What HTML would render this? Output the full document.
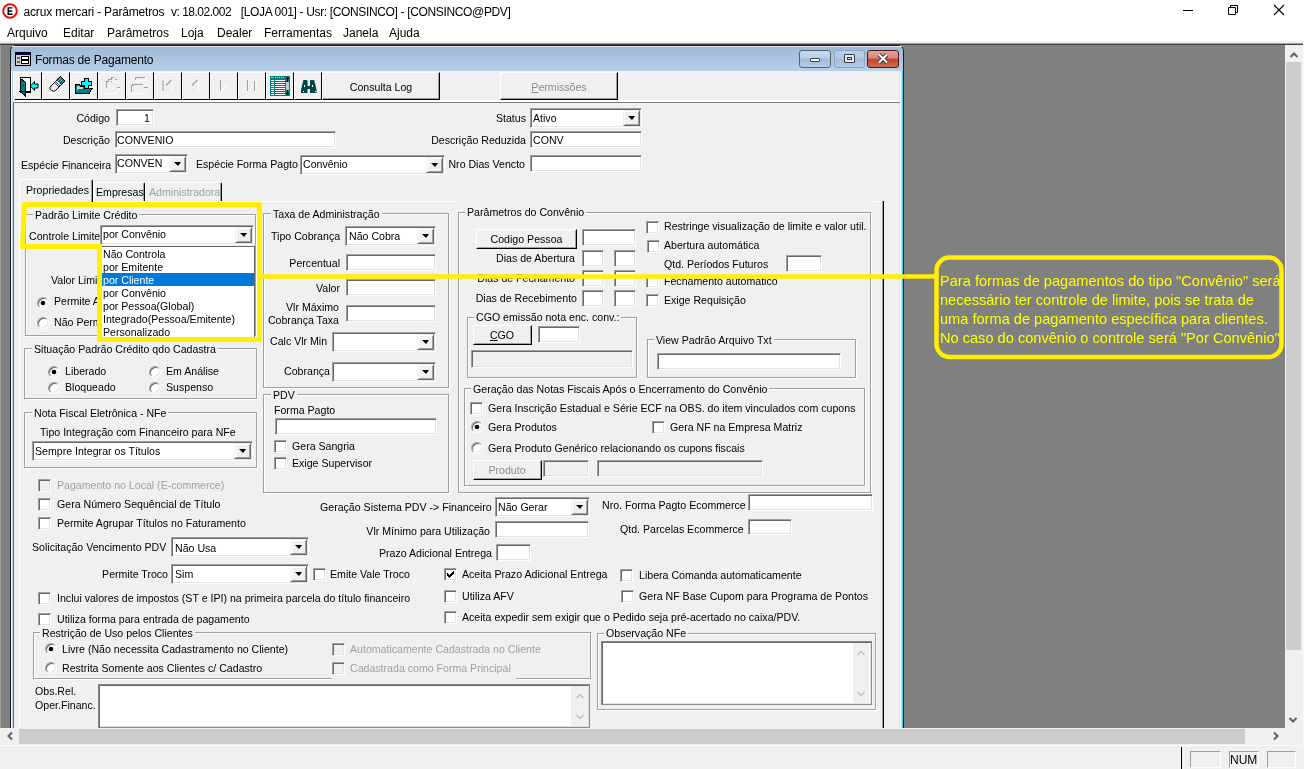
<!DOCTYPE html><html><head><meta charset="utf-8"><style>
*{box-sizing:border-box}
body{margin:0;width:1304px;height:769px;overflow:hidden;position:relative;background:#fff;font-family:"Liberation Sans",sans-serif}
.a{position:absolute}
.t{position:absolute;font-size:10.6px;line-height:13px;white-space:pre;color:#000}
.ed{position:absolute;border-top:1px solid #a0a0a0;border-left:1px solid #a0a0a0;border-right:1px solid #fff;border-bottom:1px solid #fff;box-shadow:inset 1px 1px 0 #696969,inset -1px -1px 0 #e3e3e3}
.cbtn{position:absolute;background:#f0f0f0;border-top:1px solid #f0f0f0;border-left:1px solid #f0f0f0;border-right:1px solid #696969;border-bottom:1px solid #696969;box-shadow:inset 1px 1px 0 #fff,inset -1px -1px 0 #a0a0a0}
.arr{position:absolute;left:50%;top:50%;margin-left:-4px;margin-top:-2px;width:0;height:0;border-left:4px solid transparent;border-right:3px solid transparent;border-top:4px solid #000}
.ck{position:absolute;width:13px;height:13px;border-top:1px solid #a0a0a0;border-left:1px solid #a0a0a0;border-right:1px solid #fff;border-bottom:1px solid #fff;box-shadow:inset 1px 1px 0 #696969,inset -1px -1px 0 #e3e3e3}
.rd{position:absolute;width:12px;height:12px;border-radius:50%;background:#fff;border:1px solid;border-color:#a0a0a0 #fff #fff #a0a0a0;box-shadow:inset 1px 1px 0 #696969,inset -1px -1px 0 #e3e3e3}
.dot{position:absolute;left:3px;top:3px;width:4px;height:4px;border-radius:50%;background:#000;box-shadow:0 0 0 0.4px #000}
.gb{position:absolute;border:1px solid #a0a0a0;box-shadow:inset 1px 1px 0 #fff,1px 1px 0 #fff}
.bt{position:absolute;background:#f0f0f0;border-top:1px solid #fff;border-left:1px solid #fff;border-right:1px solid #000;border-bottom:1px solid #000;box-shadow:inset -1px -1px 0 #a0a0a0}
</style></head><body><div style="position:absolute;left:0;top:0;width:1304px;height:769px;overflow:hidden;will-change:transform"><svg class="a" style="left:2px;top:3px" width="16" height="16"><circle cx="8" cy="8" r="6.8" fill="#fff" stroke="#e81010" stroke-width="2"/><path d="M5.5 4.2h5v1.4h-3.4v1.7h3.1v1.4h-3.1v1.8h3.5v1.4h-5.1z" fill="#000"/></svg>
<div class="a" style="left:23.5px;top:4px;font-size:12px;line-height:16px;white-space:pre;letter-spacing:-0.17px;color:#000">acrux mercari - Parâmetros</div>
<div class="a" style="left:171px;top:4px;font-size:12px;line-height:16px;white-space:pre;letter-spacing:-0.5px;color:#000">v: 18.02.002</div>
<div class="a" style="left:240.7px;top:4px;font-size:12px;line-height:16px;white-space:pre;letter-spacing:-0.35px;color:#000">[LOJA 001] - Usr: [CONSINCO] - [CONSINCO@PDV]</div>
<div class="a" style="left:1183px;top:10px;width:10px;height:1px;background:#000"></div>
<svg class="a" style="left:1227px;top:4px" width="12" height="12"><path d="M1.5 3.5h7v7h-7z M3.5 3.5v-2h7v7h-2" fill="none" stroke="#000" stroke-width="1"/></svg>
<svg class="a" style="left:1273px;top:4px" width="12" height="12"><path d="M1 1L11 11M11 1L1 11" stroke="#000" stroke-width="1.1"/></svg>
<div class="a" style="left:7px;top:25px;font-size:12px;line-height:16px;white-space:pre;color:#000">Arquivo</div>
<div class="a" style="left:63px;top:25px;font-size:12px;line-height:16px;white-space:pre;color:#000">Editar</div>
<div class="a" style="left:107px;top:25px;font-size:12px;line-height:16px;white-space:pre;color:#000">Parâmetros</div>
<div class="a" style="left:181px;top:25px;font-size:12px;line-height:16px;white-space:pre;color:#000">Loja</div>
<div class="a" style="left:217px;top:25px;font-size:12px;line-height:16px;white-space:pre;color:#000">Dealer</div>
<div class="a" style="left:264px;top:25px;font-size:12px;line-height:16px;white-space:pre;color:#000">Ferramentas</div>
<div class="a" style="left:343px;top:25px;font-size:12px;line-height:16px;white-space:pre;color:#000">Janela</div>
<div class="a" style="left:389px;top:25px;font-size:12px;line-height:16px;white-space:pre;color:#000">Ajuda</div>
<div class="a" style="left:0px;top:41px;width:1304px;height:2px;background:#f0f0f0;"></div>
<div class="a" style="left:0px;top:43px;width:1303px;height:1px;background:#a0a0a0;"></div>
<div class="a" style="left:0px;top:44px;width:1303px;height:1px;background:#404040;"></div>
<div class="a" style="left:0px;top:45px;width:1px;height:683px;background:#a0a0a0;"></div>
<div class="a" style="left:1px;top:45px;width:1284px;height:683px;background:#808080;"></div>
<div class="a" style="left:1285px;top:45px;width:18px;height:701px;background:#f0f0f0;"></div>
<div class="a" style="left:1303px;top:45px;width:1px;height:701px;background:#fafafa;"></div>
<div class="a" style="left:1286px;top:62px;width:15px;height:588px;background:#cdcdcd;"></div>
<svg class="a" style="left:1289px;top:50px" width="10" height="10"><path d="M1.5 7L5 3.5L8.5 7" stroke="#606060" stroke-width="2" fill="none"/></svg>
<svg class="a" style="left:1288px;top:715px" width="10" height="10"><path d="M1.5 3L5 6.5L8.5 3" stroke="#606060" stroke-width="2" fill="none"/></svg>
<div class="a" style="left:0px;top:728px;width:1285px;height:18px;background:#f0f0f0;"></div>
<div class="a" style="left:19px;top:729px;width:1226px;height:15px;background:#cdcdcd;"></div>
<svg class="a" style="left:5px;top:731px" width="10" height="10"><path d="M7 1.5L3.5 5L7 8.5" stroke="#606060" stroke-width="2" fill="none"/></svg>
<svg class="a" style="left:1271px;top:731px" width="10" height="10"><path d="M3 1.5L6.5 5L3 8.5" stroke="#606060" stroke-width="2" fill="none"/></svg>
<div class="a" style="left:0px;top:746px;width:1304px;height:23px;background:#f0f0f0;"></div>
<div class="a" style="left:0px;top:745px;width:1303px;height:1px;background:#fafafa;"></div>
<div class="a" style="left:1181px;top:747px;width:1px;height:22px;background:#000;"></div>
<div class="a" style="left:1190px;top:751px;width:31px;height:17px;border-top:1px solid #a0a0a0;border-left:1px solid #a0a0a0;border-right:1px solid #fff;border-bottom:1px solid #fff"></div>
<div class="a" style="left:1229px;top:751px;width:30px;height:17px;border-top:1px solid #a0a0a0;border-left:1px solid #a0a0a0;border-right:1px solid #fff;border-bottom:1px solid #fff"></div>
<div class="a" style="left:1267px;top:751px;width:29px;height:17px;border-top:1px solid #a0a0a0;border-left:1px solid #a0a0a0;border-right:1px solid #fff;border-bottom:1px solid #fff"></div>
<div class="a" style="left:1230px;top:752px;font-size:12px;line-height:16px;white-space:pre;color:#000">NUM</div>
<div class="a" style="left:10px;top:45px;width:894px;height:683px;background:#bcd3ea;border:1px solid #1b1b1b;border-bottom:none;border-radius:6px 6px 0 0"></div>
<div class="a" style="left:11px;top:46px;width:892px;height:26px;border-radius:5px 5px 0 0;background:linear-gradient(#9db8d6,#b9d1ea)"></div>
<div class="a" style="left:12px;top:46px;width:890px;height:1px;background:#dfe9f5;"></div>
<svg class="a" style="left:15px;top:52px" width="16" height="14"><rect x="0.5" y="0.5" width="15" height="13" fill="#d4d0c8" stroke="#000"/><rect x="1" y="1" width="14" height="2" fill="#00007a"/><path d="M2 6h3M2 10h3" stroke="#000"/><rect x="6.5" y="4.5" width="7" height="3" fill="#fff" stroke="#000"/><rect x="6.5" y="8.5" width="7" height="3" fill="#fff" stroke="#000"/></svg>
<div class="a" style="left:35px;top:52px;font-size:12px;line-height:16px;white-space:pre;letter-spacing:-0.2px;color:#000">Formas de Pagamento</div>
<div class="a" style="left:799px;top:50px;width:32px;height:18px;border:1px solid #59606b;border-radius:3px;background:linear-gradient(#c9daee 0%,#b8cde6 45%,#9fb9d8 50%,#b5cde9 100%)"></div>
<div class="a" style="left:810px;top:58px;width:10px;height:4px;background:#fff;border:1px solid #3b4048;border-radius:1px"></div>
<div class="a" style="left:834px;top:50px;width:31px;height:18px;border:1px solid #8ea6c3;border-radius:3px;background:linear-gradient(#bcd0e8 0%,#b3c9e3 45%,#a3bcda 50%,#b3cbe6 100%)"></div>
<div class="a" style="left:844px;top:54px;width:11px;height:9px;background:#e8e8e8;border:1px solid #3b4048;border-radius:1px"><div style="position:absolute;left:2px;top:2px;width:5px;height:3px;border:1px solid #3b4048;background:#b8cbe4"></div></div>
<div class="a" style="left:867px;top:50px;width:32px;height:18px;border:1px solid #4a1a1a;border-radius:3px;background:linear-gradient(#e8a294 0%,#d98374 45%,#c0442c 50%,#d26b4f 100%)"></div>
<svg class="a" style="left:876px;top:52px" width="14" height="13"><path d="M3 2.5L11 10.5M11 2.5L3 10.5" stroke="#3b3030" stroke-width="4"/><path d="M3 2.5L11 10.5M11 2.5L3 10.5" stroke="#fff" stroke-width="2.2"/></svg>
<div class="a" style="left:13px;top:71px;width:888px;height:657px;background:#f0f0f0;"></div>
<div class="a" style="left:899px;top:71px;width:1px;height:657px;background:#e3e3e3;"></div>
<div class="a" style="left:900px;top:71px;width:1px;height:657px;background:#fff;"></div>
<div class="a" style="left:901px;top:71px;width:1px;height:657px;background:#c8dcf4;"></div>
<div class="a" style="left:902px;top:71px;width:1px;height:657px;background:#3cc8f4;"></div>
<div class="a" style="left:11px;top:71px;width:1px;height:657px;background:#fff;"></div>
<div class="a" style="left:12px;top:71px;width:1px;height:657px;background:#b8d0ec;"></div>
<div class="a" style="left:14px;top:72px;width:28px;height:28px;border-top:1px solid #fff;border-left:1px solid #fff;border-right:1px solid #000;border-bottom:1px solid #000;background:#f0f0f0"></div>
<div class="a" style="left:42px;top:72px;width:28px;height:28px;border-top:1px solid #fff;border-left:1px solid #fff;border-right:1px solid #000;border-bottom:1px solid #000;background:#f0f0f0"></div>
<div class="a" style="left:70px;top:72px;width:28px;height:28px;border-top:1px solid #fff;border-left:1px solid #fff;border-right:1px solid #000;border-bottom:1px solid #000;background:#f0f0f0"></div>
<div class="a" style="left:98px;top:72px;width:28px;height:28px;border-top:1px solid #fff;border-left:1px solid #fff;border-right:1px solid #000;border-bottom:1px solid #000;background:#f0f0f0"></div>
<div class="a" style="left:126px;top:72px;width:28px;height:28px;border-top:1px solid #fff;border-left:1px solid #fff;border-right:1px solid #000;border-bottom:1px solid #000;background:#f0f0f0"></div>
<div class="a" style="left:154px;top:72px;width:28px;height:28px;border-top:1px solid #fff;border-left:1px solid #fff;border-right:1px solid #000;border-bottom:1px solid #000;background:#f0f0f0"></div>
<div class="a" style="left:182px;top:72px;width:28px;height:28px;border-top:1px solid #fff;border-left:1px solid #fff;border-right:1px solid #000;border-bottom:1px solid #000;background:#f0f0f0"></div>
<div class="a" style="left:210px;top:72px;width:28px;height:28px;border-top:1px solid #fff;border-left:1px solid #fff;border-right:1px solid #000;border-bottom:1px solid #000;background:#f0f0f0"></div>
<div class="a" style="left:238px;top:72px;width:28px;height:28px;border-top:1px solid #fff;border-left:1px solid #fff;border-right:1px solid #000;border-bottom:1px solid #000;background:#f0f0f0"></div>
<div class="a" style="left:266px;top:72px;width:28px;height:28px;border-top:1px solid #fff;border-left:1px solid #fff;border-right:1px solid #000;border-bottom:1px solid #000;background:#f0f0f0"></div>
<div class="a" style="left:294px;top:72px;width:28px;height:28px;border-top:1px solid #fff;border-left:1px solid #fff;border-right:1px solid #000;border-bottom:1px solid #000;background:#f0f0f0"></div>
<svg class="a" style="left:0;top:0" width="340" height="100" shape-rendering="crispEdges">
<!-- door exit -->
<rect x="20" y="77" width="10" height="15" fill="#fff"/>
<path d="M20 77h10v15h-10z" fill="none" stroke="#000" stroke-width="1" transform="translate(0.5,0.5)" />
<path d="M20 78 L25.5 82.5 V96 L20 91 Z" fill="#008080" stroke="#000" stroke-width="1"/>
<rect x="19" y="91" width="11" height="1" fill="#000"/>
<rect x="23" y="85" width="1" height="1" fill="#000"/>
<path d="M30.5 86 L34.5 81.5 V84 H38 V88 H34.5 V90.5 Z" fill="#00ffff" stroke="#000" stroke-width="1" shape-rendering="auto"/>
<!-- eraser -->
<g shape-rendering="auto">
<path d="M51 86 L60.5 76.5 L65 81 L55.5 90.5 Q53.5 92 51.5 90.5 L50.5 89.5 Q49 88 51 86Z" fill="#e8e8e8" stroke="#000" stroke-width="1"/>
<path d="M57 79.5 L60.5 76.5 L65 81 L61.5 84.5 Z" fill="#008080" stroke="#000" stroke-width="1"/>
<path d="M58 81 L61 78 M59.5 82.5 L62.5 79.5" stroke="#7fd0d0" stroke-width="0.8"/>
<path d="M54.5 82.5 L59 87 M55.5 81.5 L60 86" stroke="#404040" stroke-width="1"/>
<path d="M48 93h12 M61 92.5h1 M63 92.5h1" stroke="#fff" stroke-width="1"/>
</g>
<!-- folder plus -->
<path d="M75.5 84.5 H79 L80.5 86 H84 V88 H92.5 L89 93.5 H75.5 Z" fill="#008080" stroke="#000" stroke-width="1"/>
<path d="M76.5 86 H79 L80 87 H83 V88.5 H78 L76.5 92 Z" fill="#a8e0e0"/>
<path d="M84 78.5 H88 V81.5 H91 V85 H88 V88 H84 V85 H81 V81.5 H84 Z" fill="#00ffff" stroke="#000" stroke-width="1"/>
<!-- disabled folder 4 -->
<path d="M106 88 V81 H108 V79 H111 V77 H114 M110.5 81 h1 M115 79.5 h2 M117 87 h3" stroke="#a0a0a0" stroke-width="1" fill="none"/>
<path d="M106 93 H116 L120 88.5" stroke="#fff" stroke-width="1" fill="none"/>
<!-- disabled folder 5 -->
<path d="M135 80 V77 H145 M131 92 V85 H132 V84 H143 M144 87.5 h4" stroke="#a0a0a0" stroke-width="1" fill="none"/>
<path d="M131 93 H143 L148 88 M136 80 H145 V77" stroke="#fff" stroke-width="1" fill="none"/>
<!-- first -->
<path d="M163 80 V91 M166 85.5 L171.5 80" stroke="#a0a0a0" stroke-width="1.1" fill="none" shape-rendering="auto"/>
<path d="M164 80 H164.5 M172.5 81 V91" stroke="#fff" stroke-width="1" fill="none"/>
<!-- prev -->
<path d="M192 85.5 L197.5 80" stroke="#a0a0a0" stroke-width="1.1" fill="none" shape-rendering="auto"/>
<path d="M198.5 81 V91" stroke="#fff" stroke-width="1" fill="none"/>
<!-- next -->
<path d="M220.5 80 V91" stroke="#a0a0a0" stroke-width="1" fill="none"/>
<path d="M221 91 L227 86" stroke="#fff" stroke-width="1.1" fill="none" shape-rendering="auto"/>
<!-- last -->
<path d="M247.5 80 V91 M254.5 81 V91" stroke="#a0a0a0" stroke-width="1" fill="none"/>
<path d="M248 91 L254 86 M255 80 H256 V91" stroke="#fff" stroke-width="1" fill="none" shape-rendering="auto"/>
<!-- grid -->
<rect x="270" y="76" width="20" height="20" fill="#008080"/>
<path d="M271 77.5 h2 M275 77.5 h1 M277 77.5 h1 M279 77.5 h1 M281 77.5 h1 M283 77.5 h1" stroke="#c0e0e0" stroke-width="1"/>
<path d="M271 80.5 h3 M275 80.5 h10 M271 82.5 h3 M275 82.5 h10 M271 84.5 h3 M275 84.5 h10 M271 86.5 h3 M275 86.5 h10 M271 88.5 h3 M275 88.5 h10 M271 90.5 h3 M275 90.5 h10 M271 92.5 h3 M275 92.5 h10 M271 94.5 h3 M275 94.5 h10" stroke="#fff" stroke-width="1"/>
<rect x="286" y="82" width="3" height="8" fill="#c8c8c8"/>
<path d="M287 77h1v5h-1z M286 78h3v1h-3z M287 90h1v5h-1z M286 93h3v1h-3z" fill="#000"/>
<!-- binoculars -->
<g fill="#004848" shape-rendering="auto">
<rect x="303" y="80" width="4.5" height="4" rx="1"/><rect x="310" y="80" width="4.5" height="4" rx="1"/>
<path d="M302.5 83 H307.5 V86 H310 V83 H315 L316.5 90 V93 H310 V89 H307.5 V93 H301 V90 Z"/>
</g>
<path d="M304.5 85 v2 M312.5 85 v2 M302.5 91.5 h1 M314.5 91.5 h1" stroke="#fff" stroke-width="1"/>
</svg>
<div class="bt" style="left:322px;top:72px;width:118px;height:28px"></div>
<div class="t" style="left:181.0px;width:400px;text-align:center;top:81px;color:#000;">Consulta Log</div>
<div class="bt" style="left:500px;top:72px;width:118px;height:28px"></div>
<div class="t" style="left:359px;width:400px;text-align:center;top:81px;color:#8c8c8c;"><u>P</u>ermissões</div>
<div class="a" style="left:13px;top:100px;width:887px;height:2px;background:#fff;"></div>
<div class="a" style="left:13px;top:102px;width:887px;height:1px;background:#808080;"></div>
<div class="a" style="left:13px;top:103px;width:1px;height:625px;background:#707070;"></div>
<div class="t" style="right:1194px;top:112px;color:#000;">Código</div>
<div class="ed" style="left:116px;top:109px;width:38px;height:17px;background:#fff"></div>
<div class="t" style="right:1154px;top:112px;color:#000;">1</div>
<div class="t" style="right:1194px;top:134px;color:#000;">Descrição</div>
<div class="ed" style="left:115px;top:131px;width:221px;height:17px;background:#fff"></div>
<div class="t" style="left:117px;top:134px;color:#000;">CONVENIO</div>
<div class="t" style="left:21px;top:159px;color:#000;">Espécie Financeira</div>
<div class="ed" style="left:115px;top:154px;width:73px;height:20px;background:#fff"></div>
<div class="cbtn" style="left:169px;top:156px;width:17px;height:16px"><i class="arr"></i></div>
<div class="t" style="left:117px;top:157px;color:#000;">CONVEN</div>
<div class="t" style="left:196px;top:158px;color:#000;">Espécie Forma Pagto</div>
<div class="ed" style="left:300px;top:155px;width:145px;height:20px;background:#fff"></div>
<div class="cbtn" style="left:426px;top:157px;width:17px;height:16px"><i class="arr"></i></div>
<div class="t" style="left:303px;top:158px;color:#000;">Convênio</div>
<div class="t" style="right:778px;top:112px;color:#000;">Status</div>
<div class="ed" style="left:530px;top:108px;width:112px;height:20px;background:#fff"></div>
<div class="cbtn" style="left:623px;top:110px;width:17px;height:16px"><i class="arr"></i></div>
<div class="t" style="left:533px;top:112px;color:#000;">Ativo</div>
<div class="t" style="right:778px;top:134px;color:#000;">Descrição Reduzida</div>
<div class="ed" style="left:530px;top:131px;width:112px;height:17px;background:#fff"></div>
<div class="t" style="left:533px;top:134px;color:#000;">CONV</div>
<div class="t" style="right:779px;top:158px;color:#000;">Nro Dias Vencto</div>
<div class="ed" style="left:530px;top:155px;width:112px;height:17px;background:#fff"></div>
<div class="a" style="left:19px;top:201px;width:1px;height:527px;background:#fff;"></div>
<div class="a" style="left:92px;top:201px;width:366px;height:1px;background:#fff;"></div>
<div class="a" style="left:874px;top:201px;width:9px;height:1px;background:#fff;"></div>
<div class="a" style="left:882px;top:201px;width:1px;height:527px;background:#a0a0a0;"></div>
<div class="a" style="left:883px;top:201px;width:1px;height:527px;background:#000;"></div>
<div class="a" style="left:19px;top:179px;width:74px;height:23px;border-left:1px solid #fff;border-top:1px solid #fff;border-right:1px solid #000;border-radius:2px 2px 0 0;box-shadow:inset -1px 0 0 #a0a0a0"></div>
<div class="a" style="left:93px;top:182px;width:52px;height:19px;border-left:1px solid #fff;border-top:1px solid #fff;border-right:1px solid #000;border-radius:2px 2px 0 0;box-shadow:inset -1px 0 0 #a0a0a0"></div>
<div class="a" style="left:145px;top:182px;width:77px;height:19px;border-left:1px solid #fff;border-top:1px solid #fff;border-right:1px solid #000;border-radius:2px 2px 0 0;box-shadow:inset -1px 0 0 #a0a0a0"></div>
<div class="t" style="left:26px;top:184px;color:#000;">Propriedades</div>
<div class="t" style="left:96px;top:186px;color:#000;">Empresas</div>
<div class="t" style="left:149px;top:186px;color:#a0a0a0;">Administradora</div>
<div class="gb" style="left:25px;top:214px;width:231px;height:122px"></div>
<div class="t" style="left:33px;top:209px;background:#f0f0f0;padding:0 2px">Padrão Limite Crédito</div>
<div class="t" style="left:29px;top:230px;color:#000;">Controle Limite</div>
<div class="ed" style="left:100px;top:225px;width:154px;height:20px;background:#fff"></div>
<div class="cbtn" style="left:235px;top:227px;width:17px;height:16px"><i class="arr"></i></div>
<div class="t" style="left:103px;top:228px;color:#000;">por Convênio</div>
<div class="t" style="left:51px;top:274px;color:#000;">Valor Limi</div>
<div class="rd" style="left:37px;top:297px"><svg width="12" height="12" style="position:absolute;left:-1px;top:-1px"><circle cx="6" cy="6" r="2.3" fill="#000"/></svg></div>
<div class="t" style="left:54px;top:295px;color:#000;">Permite A</div>
<div class="rd" style="left:37px;top:317px"></div>
<div class="t" style="left:54px;top:316px;color:#000;">Não Perm</div>
<div class="gb" style="left:24px;top:348px;width:233px;height:51px"></div>
<div class="t" style="left:32px;top:343px;background:#f0f0f0;padding:0 2px">Situação Padrão Crédito qdo Cadastra</div>
<div class="rd" style="left:48px;top:366px"><svg width="12" height="12" style="position:absolute;left:-1px;top:-1px"><circle cx="6" cy="6" r="2.3" fill="#000"/></svg></div>
<div class="t" style="left:65px;top:365px;color:#000;">Liberado</div>
<div class="rd" style="left:149px;top:366px"></div>
<div class="t" style="left:166px;top:365px;color:#000;">Em Análise</div>
<div class="rd" style="left:48px;top:382px"></div>
<div class="t" style="left:65px;top:381px;color:#000;">Bloqueado</div>
<div class="rd" style="left:149px;top:382px"></div>
<div class="t" style="left:166px;top:381px;color:#000;">Suspenso</div>
<div class="gb" style="left:24px;top:412px;width:233px;height:56px"></div>
<div class="t" style="left:32px;top:407px;background:#f0f0f0;padding:0 2px">Nota Fiscal Eletrônica - NFe</div>
<div class="t" style="left:40px;top:426px;color:#000;">Tipo Integração com Financeiro para NFe</div>
<div class="ed" style="left:32px;top:441px;width:221px;height:20px;background:#fff"></div>
<div class="cbtn" style="left:234px;top:443px;width:17px;height:16px"><i class="arr"></i></div>
<div class="t" style="left:35px;top:445px;color:#000;">Sempre Integrar os Títulos</div>
<div class="ck" style="left:38px;top:479px;background:#f0f0f0"></div>
<div class="t" style="left:57px;top:479px;color:#a0a0a0;">Pagamento no Local (E-commerce)</div>
<div class="ck" style="left:38px;top:498px;background:#fff"></div>
<div class="t" style="left:57px;top:498px;color:#000;">Gera Número Sequêncial de Título</div>
<div class="ck" style="left:38px;top:517px;background:#fff"></div>
<div class="t" style="left:57px;top:517px;color:#000;">Permite Agrupar Títulos no Faturamento</div>
<div class="t" style="left:32px;top:541px;color:#000;">Solicitação Vencimento PDV</div>
<div class="ed" style="left:171px;top:537px;width:138px;height:20px;background:#fff"></div>
<div class="cbtn" style="left:290px;top:539px;width:17px;height:16px"><i class="arr"></i></div>
<div class="t" style="left:175px;top:542px;color:#000;">Não Usa</div>
<div class="t" style="right:1136px;top:568px;color:#000;">Permite Troco</div>
<div class="ed" style="left:171px;top:564px;width:138px;height:20px;background:#fff"></div>
<div class="cbtn" style="left:290px;top:566px;width:17px;height:16px"><i class="arr"></i></div>
<div class="t" style="left:175px;top:568px;color:#000;">Sim</div>
<div class="ck" style="left:313px;top:568px;background:#fff"></div>
<div class="t" style="left:330px;top:568px;color:#000;">Emite Vale Troco</div>
<div class="ck" style="left:444px;top:568px;background:#fff"><svg width="13" height="13" style="position:absolute;left:-1px;top:-1px" shape-rendering="crispEdges"><path d="M3 5h1v3h-1z M4 6h1v3h-1z M5 7h1v3h-1z M6 6h1v3h-1z M7 5h1v3h-1z M8 4h1v3h-1z M9 3h1v3h-1z" fill="#000"/></svg></div>
<div class="t" style="left:462px;top:568px;color:#000;">Aceita Prazo Adicional Entrega</div>
<div class="ck" style="left:620px;top:569px;background:#fff"></div>
<div class="t" style="left:639px;top:569px;color:#000;">Libera Comanda automaticamente</div>
<div class="ck" style="left:38px;top:592px;background:#fff"></div>
<div class="t" style="left:57px;top:592px;color:#000;">Inclui valores de impostos (ST e IPI) na primeira parcela do título financeiro</div>
<div class="ck" style="left:444px;top:590px;background:#fff"></div>
<div class="t" style="left:462px;top:590px;color:#000;">Utiliza AFV</div>
<div class="ck" style="left:621px;top:590px;background:#fff"></div>
<div class="t" style="left:639px;top:590px;color:#000;">Gera NF Base Cupom para Programa de Pontos</div>
<div class="ck" style="left:38px;top:613px;background:#fff"></div>
<div class="t" style="left:57px;top:613px;color:#000;">Utiliza forma para entrada de pagamento</div>
<div class="ck" style="left:444px;top:611px;background:#fff"></div>
<div class="t" style="left:462px;top:611px;color:#000;">Aceita expedir sem exigir que o Pedido seja pré-acertado no caixa/PDV.</div>
<div class="gb" style="left:33px;top:632px;width:558px;height:47px"></div>
<div class="t" style="left:40px;top:627px;background:#f0f0f0;padding:0 2px">Restrição de Uso pelos Clientes</div>
<div class="a" style="left:332px;top:677px;width:184px;height:4px;background:#f0f0f0;"></div>
<div class="rd" style="left:45px;top:643px"><svg width="12" height="12" style="position:absolute;left:-1px;top:-1px"><circle cx="6" cy="6" r="2.3" fill="#000"/></svg></div>
<div class="t" style="left:62px;top:643px;color:#000;">Livre (Não necessita Cadastramento no Cliente)</div>
<div class="rd" style="left:45px;top:662px"></div>
<div class="t" style="left:62px;top:662px;color:#000;">Restrita Somente aos Clientes c/ Cadastro</div>
<div class="ck" style="left:332px;top:643px;background:#f0f0f0"></div>
<div class="t" style="left:350px;top:643px;color:#a0a0a0;">Automaticamente Cadastrada no Cliente</div>
<div class="ck" style="left:332px;top:662px;background:#f0f0f0"></div>
<div class="t" style="left:350px;top:662px;color:#a0a0a0;">Cadastrada como Forma Principal</div>
<div class="t" style="left:35px;top:685px;color:#000;">Obs.Rel.</div>
<div class="t" style="left:35px;top:699px;color:#000;">Oper.Financ.</div>
<div class="a" style="left:98px;top:684px;width:492px;height:44px;background:#fff;border:1px solid #8a8a8a;box-shadow:inset 1px 1px 0 #696969,inset -1px -1px 0 #e3e3e3"></div>
<div class="a" style="left:571px;top:686px;width:17px;height:40px;background:#f0f0f0;"></div>
<svg class="a" style="left:575px;top:692px" width="10" height="8"><path d="M1.5 6L5 2.5L8.5 6" stroke="#c0c0c0" stroke-width="1.4" fill="none"/></svg>
<svg class="a" style="left:575px;top:713px" width="10" height="8"><path d="M1.5 2L5 5.5L8.5 2" stroke="#c0c0c0" stroke-width="1.4" fill="none"/></svg>
<div class="gb" style="left:597px;top:633px;width:279px;height:77px"></div>
<div class="t" style="left:604px;top:627px;background:#f0f0f0;padding:0 2px">Observação NFe</div>
<div class="a" style="left:601px;top:641px;width:271px;height:64px;background:#fff;border:1px solid #8a8a8a;box-shadow:inset 1px 1px 0 #696969,inset -1px -1px 0 #e3e3e3"></div>
<div class="a" style="left:853px;top:643px;width:16px;height:60px;background:#f0f0f0;"></div>
<svg class="a" style="left:856px;top:649px" width="10" height="8"><path d="M1.5 6L5 2.5L8.5 6" stroke="#c0c0c0" stroke-width="1.4" fill="none"/></svg>
<svg class="a" style="left:856px;top:690px" width="10" height="8"><path d="M1.5 2L5 5.5L8.5 2" stroke="#c0c0c0" stroke-width="1.4" fill="none"/></svg>
<div class="gb" style="left:263px;top:213px;width:186px;height:175px"></div>
<div class="t" style="left:271px;top:208px;background:#f0f0f0;padding:0 2px">Taxa de Administração</div>
<div class="t" style="left:271px;top:230px;color:#000;">Tipo Cobrança</div>
<div class="ed" style="left:345px;top:226px;width:91px;height:20px;background:#fff"></div>
<div class="cbtn" style="left:417px;top:228px;width:17px;height:16px"><i class="arr"></i></div>
<div class="t" style="left:349px;top:230px;color:#000;">Não Cobra</div>
<div class="t" style="right:964px;top:257px;color:#000;">Percentual</div>
<div class="ed" style="left:346px;top:254px;width:90px;height:17px;background:#fff"></div>
<div class="t" style="right:964px;top:282px;color:#000;">Valor</div>
<div class="ed" style="left:346px;top:279px;width:90px;height:17px;background:#fff"></div>
<div class="t" style="right:965px;top:301px;color:#000;">Vlr Máximo</div>
<div class="t" style="right:965px;top:314px;color:#000;">Cobrança Taxa</div>
<div class="ed" style="left:346px;top:305px;width:90px;height:17px;background:#fff"></div>
<div class="t" style="left:270px;top:335px;color:#000;">Calc Vlr Min</div>
<div class="ed" style="left:332px;top:332px;width:104px;height:20px;background:#fff"></div>
<div class="cbtn" style="left:417px;top:334px;width:17px;height:16px"><i class="arr"></i></div>
<div class="t" style="right:974px;top:365px;color:#000;">Cobrança</div>
<div class="ed" style="left:332px;top:362px;width:104px;height:20px;background:#fff"></div>
<div class="cbtn" style="left:417px;top:364px;width:17px;height:16px"><i class="arr"></i></div>
<div class="gb" style="left:263px;top:394px;width:186px;height:99px"></div>
<div class="t" style="left:271px;top:389px;background:#f0f0f0;padding:0 2px">PDV</div>
<div class="t" style="left:274px;top:404px;color:#000;">Forma Pagto</div>
<div class="ed" style="left:275px;top:418px;width:162px;height:17px;background:#fff"></div>
<div class="ck" style="left:274px;top:440px;background:#fff"></div>
<div class="t" style="left:292px;top:440px;color:#000;">Gera Sangria</div>
<div class="ck" style="left:274px;top:457px;background:#fff"></div>
<div class="t" style="left:292px;top:457px;color:#000;">Exige Supervisor</div>
<div class="gb" style="left:458px;top:212px;width:413px;height:281px"></div>
<div class="t" style="left:465px;top:206px;background:#f0f0f0;padding:0 2px">Parâmetros do Convênio</div>
<div class="bt" style="left:476px;top:229px;width:101px;height:20px"></div>
<div class="t" style="left:326.5px;width:400px;text-align:center;top:233px;color:#000;">Codigo Pessoa</div>
<div class="ed" style="left:582px;top:229px;width:54px;height:17px;background:#fff"></div>
<div class="t" style="right:729px;top:252px;color:#000;">Dias de Abertura</div>
<div class="ed" style="left:582px;top:250px;width:22px;height:17px;background:#fff"></div>
<div class="ed" style="left:614px;top:250px;width:22px;height:17px;background:#fff"></div>
<div class="t" style="right:729px;top:272px;color:#000;">Dias de Fechamento</div>
<div class="ed" style="left:582px;top:270px;width:22px;height:17px;background:#fff"></div>
<div class="ed" style="left:614px;top:270px;width:22px;height:17px;background:#fff"></div>
<div class="t" style="right:727px;top:292px;color:#000;">Dias de Recebimento</div>
<div class="ed" style="left:582px;top:290px;width:22px;height:17px;background:#fff"></div>
<div class="ed" style="left:614px;top:290px;width:22px;height:17px;background:#fff"></div>
<div class="gb" style="left:467px;top:317px;width:170px;height:61px"></div>
<div class="t" style="left:474px;top:311px;background:#f0f0f0;padding:0 2px">CGO emissão nota enc. conv.:</div>
<div class="bt" style="left:473px;top:325px;width:59px;height:20px"></div>
<div class="t" style="left:302px;width:400px;text-align:center;top:329px;color:#000;"><u>C</u>GO</div>
<div class="ed" style="left:538px;top:326px;width:42px;height:17px;background:#fff"></div>
<div class="ed" style="left:471px;top:350px;width:162px;height:18px;background:#f0f0f0"></div>
<div class="ck" style="left:646px;top:221px;background:#fff"></div>
<div class="t" style="left:664px;top:220px;color:#000;">Restringe visualização de limite e valor util.</div>
<div class="ck" style="left:647px;top:240px;background:#fff"></div>
<div class="t" style="left:664px;top:239px;color:#000;">Abertura automática</div>
<div class="t" style="left:664px;top:258px;color:#000;">Qtd. Períodos Futuros</div>
<div class="ed" style="left:786px;top:255px;width:36px;height:17px;background:#fff"></div>
<div class="ck" style="left:646px;top:275px;background:#fff"></div>
<div class="t" style="left:664px;top:275px;color:#000;">Fechamento automático</div>
<div class="ck" style="left:646px;top:294px;background:#fff"></div>
<div class="t" style="left:664px;top:294px;color:#000;">Exige Requisição</div>
<div class="gb" style="left:647px;top:339px;width:209px;height:39px"></div>
<div class="t" style="left:654px;top:334px;background:#f0f0f0;padding:0 2px">View Padrão Arquivo Txt</div>
<div class="ed" style="left:657px;top:353px;width:184px;height:17px;background:#fff"></div>
<div class="gb" style="left:464px;top:388px;width:401px;height:98px"></div>
<div class="t" style="left:471px;top:383px;background:#f0f0f0;padding:0 2px">Geração das Notas Fiscais Após o Encerramento do Convênio</div>
<div class="ck" style="left:470px;top:402px;background:#fff"></div>
<div class="t" style="left:488px;top:402px;color:#000;">Gera Inscrição Estadual e Série ECF na OBS. do item vinculados com cupons</div>
<div class="rd" style="left:471px;top:421px"><svg width="12" height="12" style="position:absolute;left:-1px;top:-1px"><circle cx="6" cy="6" r="2.3" fill="#000"/></svg></div>
<div class="t" style="left:488px;top:421px;color:#000;">Gera Produtos</div>
<div class="ck" style="left:652px;top:421px;background:#fff"></div>
<div class="t" style="left:670px;top:421px;color:#000;">Gera NF na Empresa Matriz</div>
<div class="rd" style="left:471px;top:442px"></div>
<div class="t" style="left:488px;top:442px;color:#000;">Gera Produto Genérico relacionando os cupons fiscais</div>
<div class="bt" style="left:473px;top:460px;width:69px;height:20px"></div>
<div class="t" style="left:307px;width:400px;text-align:center;top:464px;color:#8c8c8c;">Produto</div>
<div class="ed" style="left:543px;top:460px;width:46px;height:17px;background:#f0f0f0"></div>
<div class="ed" style="left:597px;top:460px;width:166px;height:17px;background:#f0f0f0"></div>
<div class="t" style="left:320px;top:501px;color:#000;">Geração Sistema PDV -&gt; Financeiro</div>
<div class="ed" style="left:495px;top:497px;width:95px;height:20px;background:#fff"></div>
<div class="cbtn" style="left:571px;top:499px;width:17px;height:16px"><i class="arr"></i></div>
<div class="t" style="left:498px;top:501px;color:#000;">Não Gerar</div>
<div class="t" style="right:814px;top:525px;color:#000;">Vlr Mínimo para Utilização</div>
<div class="ed" style="left:495px;top:521px;width:94px;height:17px;background:#fff"></div>
<div class="t" style="right:812px;top:547px;color:#000;">Prazo Adicional Entrega</div>
<div class="ed" style="left:496px;top:544px;width:35px;height:17px;background:#fff"></div>
<div class="t" style="left:602px;top:499px;color:#000;">Nro. Forma Pagto Ecommerce</div>
<div class="ed" style="left:748px;top:494px;width:125px;height:17px;background:#fff"></div>
<div class="t" style="left:620px;top:523px;color:#000;">Qtd. Parcelas Ecommerce</div>
<div class="ed" style="left:748px;top:519px;width:44px;height:16px;background:#fff"></div>
<div class="a" style="left:101px;top:246px;width:154px;height:93px;background:#fff;border:1px solid #646464"></div>
<div class="a" style="left:102px;top:273px;width:152px;height:13px;background:#0078d7;"></div>
<div class="t" style="left:103px;top:248px;color:#000;">Não Controla</div>
<div class="t" style="left:103px;top:261px;color:#000;">por Emitente</div>
<div class="t" style="left:103px;top:274px;color:#fff;">por Cliente</div>
<div class="t" style="left:103px;top:287px;color:#000;">por Convênio</div>
<div class="t" style="left:103px;top:300px;color:#000;">por Pessoa(Global)</div>
<div class="t" style="left:103px;top:313px;color:#000;">Integrado(Pessoa/Emitente)</div>
<div class="t" style="left:103px;top:326px;color:#000;">Personalizado</div>
<svg class="a" style="left:0;top:0" width="1304" height="769"><path d="M24.5 204.5 H259.5 V339.5 H99.5 V246.5 H22.5 Z" fill="none" stroke="#ffef00" stroke-width="5" stroke-linejoin="round"/><path d="M262 276.5 H936" stroke="#ffef00" stroke-width="4.5"/><rect x="936.5" y="257.5" width="345" height="99.5" rx="13" ry="13" fill="none" stroke="#ffef00" stroke-width="4.5"/></svg>
<div class="a" style="left:940px;top:272px;font-size:14.6px;line-height:19px;white-space:pre;color:#ffff00">Para formas de pagamentos do tipo &quot;Convênio&quot; será</div>
<div class="a" style="left:940px;top:291px;font-size:14.6px;line-height:19px;white-space:pre;color:#ffff00">necessário ter controle de limite, pois se trata de</div>
<div class="a" style="left:940px;top:310px;font-size:14.6px;line-height:19px;white-space:pre;color:#ffff00">uma forma de pagamento específica para clientes.</div>
<div class="a" style="left:940px;top:329px;font-size:14.6px;line-height:19px;white-space:pre;color:#ffff00">No caso do convênio o controle será &quot;Por Convênio&quot;</div></div></body></html>
